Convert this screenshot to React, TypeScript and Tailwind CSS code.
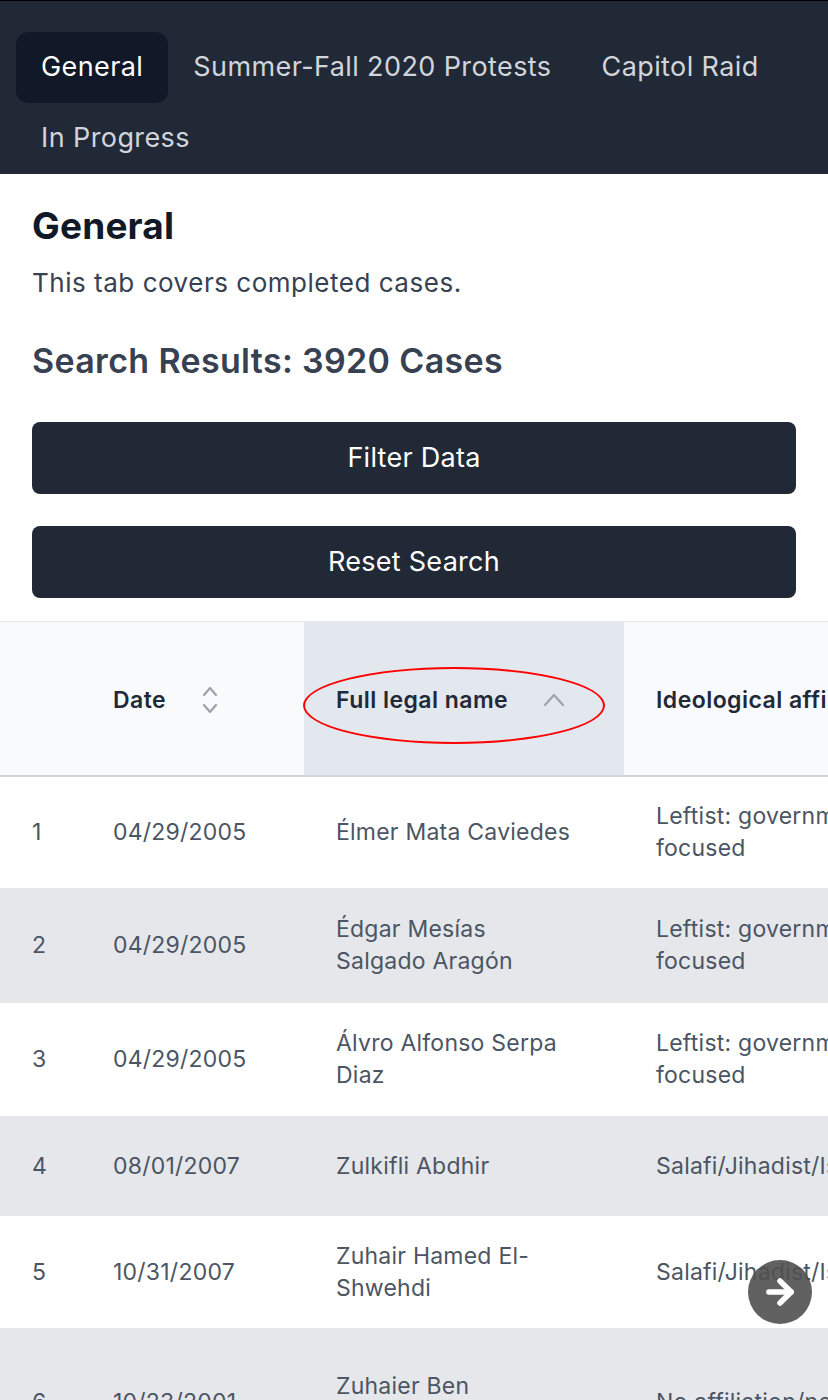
import { ArrowRight } from 'lucide-react';

interface CaseRow {
  id: number;
  date: string;
  name: string[];
  ideology: string[];
  height: string;
  shaded: boolean;
}

const tabs = ['General', 'Summer-Fall 2020 Protests', 'Capitol Raid', 'In Progress'];

const rows: CaseRow[] = [
  { id: 1, date: '04/29/2005', name: ['Élmer Mata Caviedes'], ideology: ['Leftist: government-', 'focused'], height: 'h-[112px]', shaded: false },
  { id: 2, date: '04/29/2005', name: ['Édgar Mesías', 'Salgado Aragón'], ideology: ['Leftist: government-', 'focused'], height: 'h-[115px]', shaded: true },
  { id: 3, date: '04/29/2005', name: ['Álvro Alfonso Serpa', 'Diaz'], ideology: ['Leftist: government-', 'focused'], height: 'h-[113px]', shaded: false },
  { id: 4, date: '08/01/2007', name: ['Zulkifli Abdhir'], ideology: ['Salafi/Jihadist/Islamist-focused'], height: 'h-[100px]', shaded: true },
  { id: 5, date: '10/31/2007', name: ['Zuhair Hamed El-', 'Shwehdi'], ideology: ['Salafi/Jihadist/Islamist-focused'], height: 'h-[112px]', shaded: false },
  { id: 6, date: '10/23/2001', name: ['Zuhaier Ben', 'Mohamed Saidani'], ideology: ['No affiliation/not applicable'], height: 'h-[148px]', shaded: true },
];

function DateSortIcon() {
  return (
    <svg width="16" height="30" viewBox="0 0 16 30" fill="none" stroke="#9ca3af" strokeWidth="2.2" strokeLinecap="round" strokeLinejoin="round">
      <path d="M2 10 L8 3 L14 10" />
      <path d="M2 20 L8 27 L14 20" />
    </svg>
  );
}

function AscIcon() {
  return (
    <svg width="22" height="14" viewBox="0 0 22 14" fill="none" stroke="#9ca3af" strokeWidth="2.2" strokeLinecap="round" strokeLinejoin="round">
      <path d="M2 12 L11 2 L20 12" />
    </svg>
  );
}

export default function App() {
  return (
    <div className="min-h-[1400px] bg-white font-['Inter',sans-serif] overflow-hidden">
      {/* Tabs */}
      <nav className="bg-[#212836] border-t border-black pt-[31px] px-4 flex flex-wrap">
        {tabs.map((tab, i) => (
          <div
            key={tab}
            className={`h-[71px] px-[25px] flex items-center text-[27px] tracking-[0.015em] rounded-xl ${
              i === 0 ? 'bg-[#111827] text-white' : 'text-[#d1d5db]'
            }`}
          >
            {tab}
          </div>
        ))}
      </nav>

      {/* Header */}
      <div className="px-8 pt-8">
        <h1 className="text-[37px] leading-[40px] tracking-[0.005em] font-bold text-[#111827]">General</h1>
        <p className="mt-[21px] text-[26px] leading-8 tracking-[0.02em] text-[#374151]">This tab covers completed cases.</p>
        <h2 className="mt-[42px] text-[34px] leading-10 tracking-[0.01em] font-semibold text-[#374151]">Search Results: 3920 Cases</h2>

        <div className="mt-[41px] flex flex-col gap-8">
          <button className="h-[72px] w-full rounded-lg bg-[#222936] text-white text-[27px] tracking-[0.01em]">Filter Data</button>
          <button className="h-[72px] w-full rounded-lg bg-[#222936] text-white text-[27px] tracking-[0.01em]">Reset Search</button>
        </div>
      </div>

      {/* Table */}
      <div className="relative mt-[23px] overflow-hidden">
        <table className="table-fixed w-[1200px] border-collapse text-[23px] leading-8 tracking-[0.01em]">
          <colgroup>
            <col className="w-[81px]" />
            <col className="w-[223px]" />
            <col className="w-[320px]" />
            <col className="w-[576px]" />
          </colgroup>
          <thead>
            <tr className="h-[154px] bg-[#f9fafb] border-t border-[#e5e7eb] border-b-2 border-b-[#d1d5db]">
              <th />
              <th className="pl-8 pt-1 text-left text-[23px] tracking-[0.02em] font-semibold text-[#1f2937]">
                <div className="flex items-center gap-9">
                  <span>Date</span>
                  <DateSortIcon />
                </div>
              </th>
              <th className="pl-8 pt-1 text-left text-[23px] tracking-[0.02em] font-semibold text-[#1f2937] bg-[#e3e7ee]">
                <div className="flex items-center gap-[35px]">
                  <span>Full legal name</span>
                  <AscIcon />
                </div>
              </th>
              <th className="pl-8 pt-1 text-left text-[23px] tracking-[0.02em] font-semibold text-[#1f2937] whitespace-nowrap">Ideological affiliation</th>
            </tr>
          </thead>
          <tbody>
            {rows.map(row => (
              <tr key={row.id} className={`${row.height} ${row.shaded ? 'bg-[#e5e7eb]' : 'bg-white'} text-[#4b5563]`}>
                <td className="pl-8">{row.id}</td>
                <td className="pl-8">{row.date}</td>
                <td className="pl-8">
                  {row.name.map(line => (
                    <div key={line} className="whitespace-nowrap">{line}</div>
                  ))}
                </td>
                <td className="pl-8">
                  {row.ideology.map(line => (
                    <div key={line} className="whitespace-nowrap">{line}</div>
                  ))}
                </td>
              </tr>
            ))}
          </tbody>
        </table>

        {/* annotation ellipse */}
        <div className="absolute left-[303px] top-[46px] w-[302px] h-[77px] rounded-[50%] border-2 border-[#ff0000] pointer-events-none" />
      </div>

      {/* Floating next button */}
      <button className="fixed right-4 top-[1260px] w-16 h-16 rounded-full bg-[#505050]/90 flex items-center justify-center">
        <ArrowRight size={38} strokeWidth={3.5} className="text-white" />
      </button>
    </div>
  );
}
